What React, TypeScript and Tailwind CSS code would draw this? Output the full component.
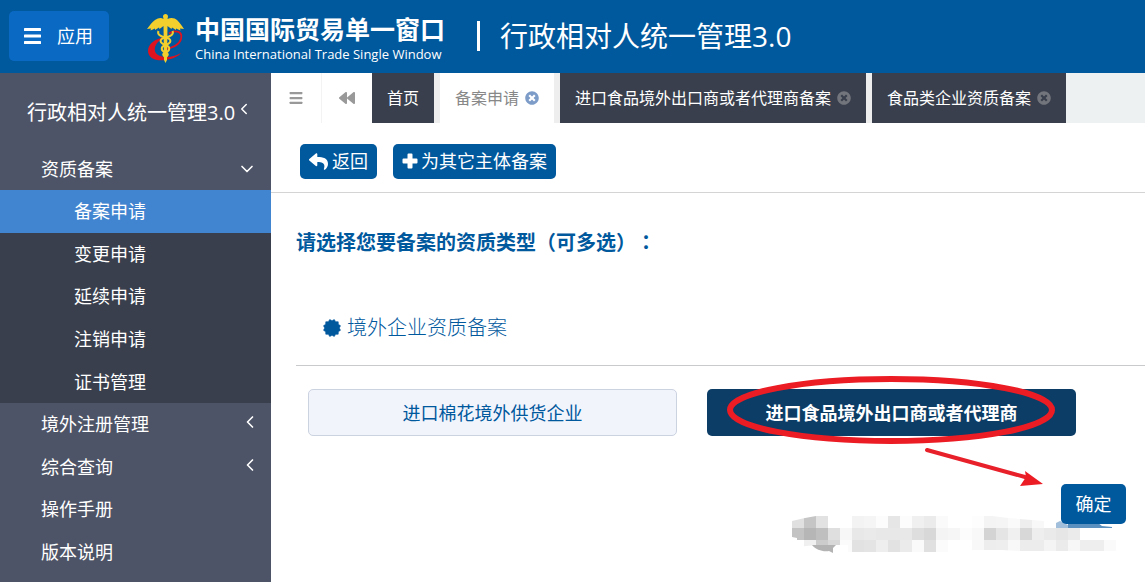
import { useState } from "react";
import type { ReactNode } from "react";
import { ChevronDown, ChevronLeft } from "lucide-react";
import { FaBackward, FaReply, FaTimesCircle } from "react-icons/fa";

function Bars({ className }: { className: string }) {
  return (
    <svg viewBox="0 0 17 16" className={className} fill="currentColor" aria-hidden="true">
      <rect x="0" y="0" width="17" height="3" rx="0.6" />
      <rect x="0" y="6.5" width="17" height="3" rx="0.6" />
      <rect x="0" y="13" width="17" height="3" rx="0.6" />
    </svg>
  );
}

function Plus() {
  return (
    <svg viewBox="0 0 16 16" className="size-4 shrink-0" fill="currentColor" aria-hidden="true">
      <path d="M6.500 0.500 H9.500 Q10.500 0.500 10.500 1.500 V5.500 H14.500 Q15.500 5.500 15.500 6.500 V9.500 Q15.500 10.500 14.500 10.500 H10.500 V14.500 Q10.500 15.500 9.500 15.500 H6.500 Q5.500 15.500 5.500 14.500 V10.500 H1.500 Q0.500 10.500 0.500 9.500 V6.500 Q0.500 5.500 1.500 5.500 H5.500 V1.500 Q5.500 0.500 6.500 0.500 Z" />
    </svg>
  );
}

const points = Array.from({ length: 24 }, (_, i) => {
  const radius = i % 2 === 0 ? 8.8 : 7.3;
  const angle = (Math.PI * (i + 1)) / 12;
  return `${(9 + radius * Math.cos(angle)).toFixed(2)},${(9 + radius * Math.sin(angle)).toFixed(2)}`;
}).join(" ");

function Seal() {
  return (
    <svg viewBox="0 0 18 18" className="size-[18px] shrink-0" fill="currentColor" stroke="currentColor" strokeLinejoin="round" strokeWidth="0.6" aria-hidden="true">
      <polygon points={points} />
    </svg>
  );
}

function Logo() {
  return (
    <svg viewBox="0 0 38 50" className="h-[50px] w-[38px] shrink-0" fill="none" aria-hidden="true">
      <path d="M22 20.500 C29 16 36 19 34 26 C32.500 31.500 25 35 17 36.500" stroke="#dd1420" strokeWidth="1.800" />
      <path d="M14 25 C6 27 1 32 1 38 C1 45 9 48.500 18 47 C26 46 32 43 34 40 C27 44 19 45 13 43 C5 40 7 31 14 26.500 Z" fill="#dd1420" />
      <path d="M18.500 1 C20 1 21 2 21 3.500 L20.500 6 C24 4 28 5 30 7 C33 10 35 13 37 16 L33 15.500 L33.500 17.500 L29 15.500 L29 17 L25 14.500 L24.500 16 L20.500 13 L20 47 L18.500 50 L17 47 L16.500 13 L12.500 16 L12 14.500 L8 17 L8 15.500 L3.500 17.500 L4 15.500 L0 16 C3 12 5 9 8 7 C11 5 14 4 16.500 6 L16 3.500 C16 2 17 1 18.500 1 Z" fill="#f2cf2c" />
      <path d="M11.500 18 C10 21 13 23.500 18.500 24.500 C25 26 25 30 18.500 32 C13 34 14 38 18.500 39.500 C22 41 21 43 18.500 44" stroke="#f2cf2c" strokeWidth="2" />
      <path d="M25.500 18 C27 21 24 23.500 18.500 24.500 C12 26 12 30 18.500 32 C24 34 23 38 18.500 39.500 C15 41 16 43 18.500 44" stroke="#f2cf2c" strokeWidth="2" />
    </svg>
  );
}

const submenu = ["备案申请", "变更申请", "延续申请", "注销申请", "证书管理"];
const sections = [
  { label: "境外注册管理", nested: true },
  { label: "综合查询", nested: true },
  { label: "操作手册", nested: false },
  { label: "版本说明", nested: false },
];

function Sidebar() {
  return (
    <nav className="w-[271px] shrink-0 bg-[#4e5467] text-lg text-white">
      <a href="#home" className="flex h-[75px] items-center pt-1 pl-[27px] text-xl whitespace-nowrap">
        行政相对人统一管理3.0
        <ChevronLeft className="mb-2 size-[18px]" />
      </a>
      <a href="#records" className="flex h-[42px] items-center justify-between pr-[14px] pl-[41px]">
        资质备案
        <ChevronDown className="size-5" />
      </a>
      <ul className="grid h-[213px] grid-rows-5 bg-[#393f4d]">
        {submenu.map((label, i) => (
          <li key={label} className={i === 0 ? "bg-[#4184d0]" : ""}>
            <a href="#apply" className="flex h-full items-center pl-[74px]">{label}</a>
          </li>
        ))}
      </ul>
      <ul className="grid h-[170px] grid-rows-4">
        {sections.map((s) => (
          <li key={s.label}>
            <a href="#section" className="flex h-full items-center justify-between pr-[11px] pl-[41px]">
              {s.label}
              {s.nested && <ChevronLeft className="mb-1 size-5" />}
            </a>
          </li>
        ))}
      </ul>
    </nav>
  );
}

function Tab({ children, active = false, closable = true }: { children: ReactNode; active?: boolean; closable?: boolean }) {
  return (
    <div className={`flex items-center gap-[6px] px-[15px] text-base whitespace-nowrap ${active ? "bg-white text-[#888888]" : "bg-[#393f4d] text-white"}`}>
      <a href="#tab">{children}</a>
      {closable && (
        <button type="button" aria-label="关闭" className={active ? "text-[#7d9cc8]" : "text-[#72757b]"}>
          <FaTimesCircle className="size-[14px]" />
        </button>
      )}
    </div>
  );
}

const mosaic: [number, string[]][] = [
  [0, ["#e0e0e0", "#c5c5c5", "#e2e2e2", "", "", "#f3f3f3", "#f5f5f5", "#fcfcfc", "#e6e6e6", "#fcfcfc", "#f0f0f0", "#ebebeb", "#fafafa", "", "", "#fdfdfd", "#f4f4f4", "#f5f5f5", "#fafafa", "#eeeeee", "#f8f8f8"]],
  [12, ["#c3c3c3", "#b6b6b6", "#bfbfbf", "#dfdfdf", "#f7f7f7", "#e8e8e8", "#eaeaea", "#e8e8e8", "#e8e8e8", "#e8e8e8", "#dedede", "#d8d8d8", "#f4f4f4", "#f6f6f6", "#fcfcfc", "#f8f8f8", "#d4d4d4", "#e5e5e5", "#f0f0f0", "#d8d8d8", "#eeeeee", "#eaeaea", "#e6e6e6", "#ebebeb"]],
  [24, ["", "#f0f0f0", "#cccccc", "#d8d8d8", "#fbfbfb", "#e2e2e2", "#e4e4e4", "#eeeeee", "#e2e2e2", "#ebebeb", "#fafafa", "#e0e0e0", "#fbfbfb", "", "", "#f8f8f8", "#ededed", "#eeeeee", "#f8f8f8", "#ececec", "#ececec", "#f4f4f4", "#ebebeb", "#f7f7f7", "#eeeeee", "#eeeeee", "#fafafa"]],
];

function Watermark() {
  return (
    <svg viewBox="0 0 324 38" className="absolute top-8 right-[29px] h-[38px] w-[324px]" aria-hidden="true">
      <defs>
        <clipPath id="edge">
          <path d="M0 5 L13 2 L24 0 H200 L216 2 L252 5 V12 H324 V35 H228 L210 34 H180 V36 H56 V29 H24 L5 31 V22 L0 21 Z" />
        </clipPath>
      </defs>
      <g clipPath="url(#edge)" shapeRendering="crispEdges">
        {mosaic.map(([y, row]) =>
          row.map((fill, i) => fill && <rect key={`${y}-${i}`} x={i * 12} y={y} width="12" height="12" fill={fill} />),
        )}
      </g>
      <path d="M20 29 H44 L41 32 L41 37 L37 35 C31 36 24 34 20 29 Z" fill="#b3b3b3" />
      <path d="M264 7 L268 5 L276 9 V12 H264 Z" fill="#a1bfda" />
      <path d="M276 7 H306 L310 10 L320 11 V12 H276 Z" fill="#5a90bf" />
    </svg>
  );
}

const cardBase = "h-[47px] w-full rounded-[5px] text-lg whitespace-nowrap";

export default function App() {
  const [selected, setSelected] = useState(1);
  const idle = "border border-[#cbd2e0] bg-[#f2f4fc] text-[#00589d]";
  const chosen = "bg-[#0c3d66] font-bold text-white";
  return (
    <div className="flex min-h-screen flex-col overflow-x-hidden bg-white font-['Open_Sans','Noto_Sans_CJK_SC',sans-serif]">
      <header className="flex h-[73px] items-center bg-[#00589d] pb-[2px] text-white">
        <button type="button" className="ml-[9px] flex h-[50px] w-[100px] shrink-0 items-center gap-4 rounded-[5px] bg-[#0a69c3] pl-[15px] text-lg">
          <Bars className="h-4 w-[17px]" />
          应用
        </button>
        <a href="#home" className="ml-[38px] flex items-center gap-[10px] pt-1">
          <Logo />
          <div className="whitespace-nowrap">
            <div className="text-[25px] leading-8 font-bold">中国国际贸易单一窗口</div>
            <div className="text-[13px] leading-[18px]">China International Trade Single Window</div>
          </div>
        </a>
        <span className="ml-8 h-[30px] w-[3px] shrink-0 bg-white" />
        <h1 className="ml-5 text-[28px] leading-none whitespace-nowrap">行政相对人统一管理3.0</h1>
      </header>
      <div className="flex flex-1">
        <Sidebar />
        <main className="min-w-0 flex-1">
          <div className="flex h-[50px] overflow-hidden bg-[#edf1f2]">
            <button type="button" aria-label="菜单" className="flex w-[51px] shrink-0 items-center justify-center border-r border-[#f3f3f3] bg-white text-[#999999]">
              <Bars className="h-3 w-[14px]" />
            </button>
            <button type="button" aria-label="后退" className="flex w-[50px] shrink-0 items-center justify-center bg-white text-[#999999]">
              <FaBackward className="size-4" />
            </button>
            <div className="flex gap-[6px] bg-[#eeeeee]">
              <Tab closable={false}>首页</Tab>
              <Tab active>备案申请</Tab>
              <Tab>进口食品境外出口商或者代理商备案</Tab>
              <Tab>食品类企业资质备案</Tab>
            </div>
          </div>
          <div className="flex h-[70px] items-center gap-4 border-b border-[#d4d4d4] pt-[7px] pl-[29px] text-lg text-white">
            <button type="button" className="flex h-[35px] items-center gap-1 rounded-[5px] bg-[#00589d] px-[9px]">
              <FaReply className="size-[19px]" />
              返回
            </button>
            <button type="button" className="flex h-[35px] items-center gap-[3px] rounded-[5px] bg-[#00589d] px-[9px]">
              <Plus />
              为其它主体备案
            </button>
          </div>
          <section className="pl-[25px]">
            <h2 className="pt-[35px] text-xl font-bold text-[#00589d] [text-spacing-trim:space-all]">
              请选择您要备案的资质类型（可多选）<span className="font-['Noto_Sans_CJK_TC',sans-serif]">：</span>
            </h2>
            <h3 className="mt-[33px] flex h-[76px] items-center gap-[6px] border-b border-[#c8cacc] pl-[27px] text-xl font-light text-[#00589d]">
              <Seal />
              境外企业资质备案
            </h3>
            <div className="mt-[23px] grid grid-cols-2 gap-[30px] pr-[69px] pl-3">
              <button type="button" className={`${cardBase} ${selected === 0 ? chosen : idle}`} onClick={() => setSelected(0)}>
                进口棉花境外供货企业
              </button>
              <div className="relative">
                <button type="button" className={`${cardBase} ${selected === 1 ? chosen : idle}`} onClick={() => setSelected(1)}>
                  进口食品境外出口商或者代理商
                </button>
                <svg viewBox="0 0 370 116" className="pointer-events-none absolute -top-4 left-0 h-[116px] w-[370px]" fill="none" aria-hidden="true">
                  <ellipse cx="184" cy="37" rx="161" ry="31" stroke="#ec1c24" strokeWidth="6" />
                  <path d="M220 77 L318 104" stroke="#e8202a" strokeWidth="4" strokeLinecap="round" />
                  <path d="M336 111 L318 98 L319 104 L313 113 Z" fill="#ec1c24" />
                </svg>
              </div>
            </div>
            <div className="relative mt-12 flex justify-end pr-[19px]">
              <Watermark />
              <button type="button" className="relative h-10 w-[65px] rounded-[5px] bg-[#00589d] text-lg text-white">确定</button>
            </div>
          </section>
        </main>
      </div>
    </div>
  );
}
